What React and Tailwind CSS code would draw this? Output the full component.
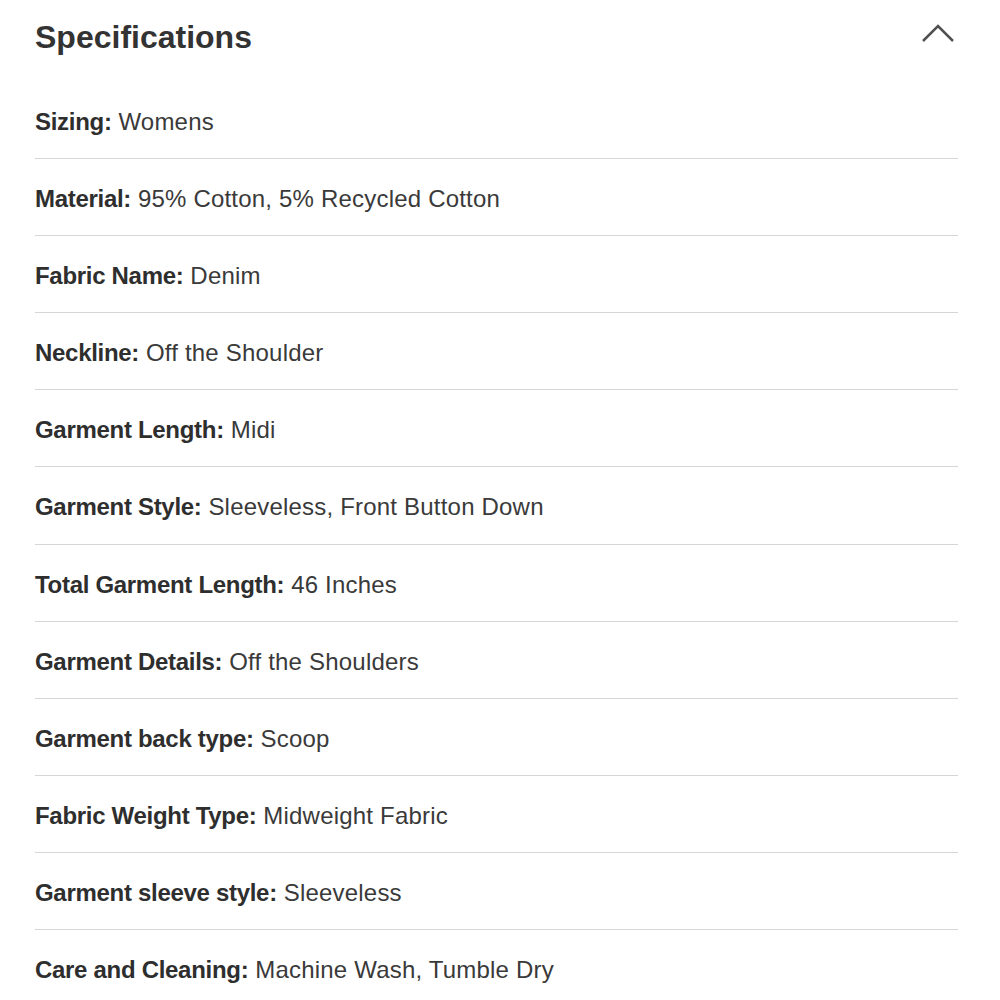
const specs = [
  ["Sizing", "Womens"],
  ["Material", "95% Cotton, 5% Recycled Cotton"],
  ["Fabric Name", "Denim"],
  ["Neckline", "Off the Shoulder"],
  ["Garment Length", "Midi"],
  ["Garment Style", "Sleeveless, Front Button Down"],
  ["Total Garment Length", "46 Inches"],
  ["Garment Details", "Off the Shoulders"],
  ["Garment back type", "Scoop"],
  ["Fabric Weight Type", "Midweight Fabric"],
  ["Garment sleeve style", "Sleeveless"],
  ["Care and Cleaning", "Machine Wash, Tumble Dry"],
];

export default function App() {
  return (
    <div className="w-[1000px] h-[1000px] bg-white overflow-hidden pl-[35px] pr-[42px] text-[#333333] font-['Liberation_Sans',Arial,sans-serif]">
      {/* header */}
      <div className="h-[82px] flex items-start justify-between">
        <h2 className="mt-[17px] text-[32px] leading-[40px] font-bold text-[#333333]">Specifications</h2>
        <svg width="34" height="20" viewBox="0 0 34 20" className="mt-[24px] mr-[3px]" fill="none">
          <path d="M2 17 L17 2 L32 17" stroke="#505050" strokeWidth="2.5" />
        </svg>
      </div>

      {/* spec rows */}
      <div className="flex flex-col">
        {specs.map(([label, value], i) => (
          <div
            key={label}
            className={
              "h-[77.1px] flex items-start pt-[28px] text-[24px] leading-[24px] " +
              (i < specs.length - 1 ? "border-b border-[#d6d6d6]" : "")
            }
          >
            <span className="text-[#3a3a3a] tracking-[0.2px]">
              <span className="font-bold tracking-[-0.3px] text-[#2e2e2e]">{label}:</span> {value}
            </span>
          </div>
        ))}
      </div>
    </div>
  );
}
